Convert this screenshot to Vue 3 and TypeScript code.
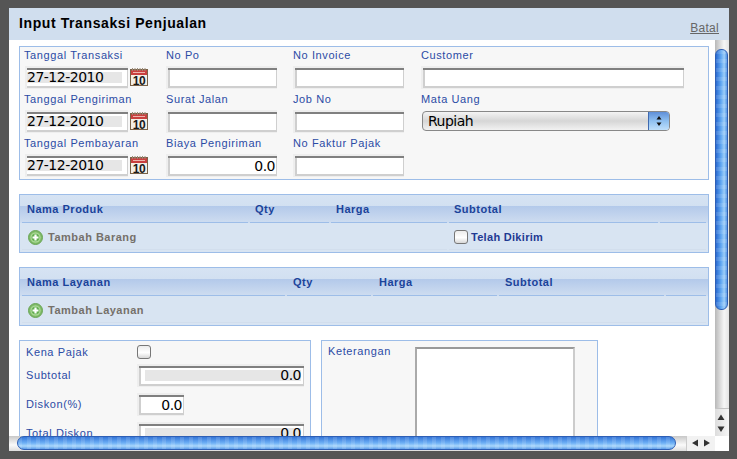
<script setup lang="ts">
interface Field {
  label: string;
  value?: string;
  kind: 'date' | 'text' | 'number' | 'wide' | 'select' | 'none';
}

const fields: Field[] = [
  { label: 'Tanggal Transaksi', value: '27-12-2010', kind: 'date' },
  { label: 'No Po', kind: 'text' },
  { label: 'No Invoice', kind: 'text' },
  { label: 'Customer', kind: 'wide' },
  { label: 'Tanggal Pengiriman', value: '27-12-2010', kind: 'date' },
  { label: 'Surat Jalan', kind: 'text' },
  { label: 'Job No', kind: 'text' },
  { label: 'Mata Uang', value: 'Rupiah', kind: 'select' },
  { label: 'Tanggal Pembayaran', value: '27-12-2010', kind: 'date' },
  { label: 'Biaya Pengiriman', value: '0.0', kind: 'number' },
  { label: 'No Faktur Pajak', kind: 'text' },
  { label: '', kind: 'none' },
];
</script>

<template>
  <div class="page">
    <div class="window">
      <header class="head">
        <h1>Input Transaksi Penjualan</h1>
        <a class="cancel">Batal</a>
      </header>
      <div class="main">
        <div class="content">
          <section class="box form-grid">
            <div v-for="f in fields" :key="f.label" class="field">
              <template v-if="f.kind !== 'none'">
                <label>{{ f.label }}</label>
                <div v-if="f.kind === 'date'" class="date-row">
                  <div class="inp date"><span>{{ f.value }}</span></div>
                  <svg class="cal" width="18" height="18" viewBox="0 0 18 18">
                    <rect x="0.500" y="1.500" width="17" height="16" fill="#f4efe6" stroke="#7a6248" />
                    <rect x="1" y="2" width="16" height="5" fill="#c9403f" />
                    <path d="M2.500 0v3M5 0v3M7.500 0v3M10 0v3M12.500 0v3M15 0v3" stroke="#9a8a78" />
                    <path d="M3 4.500h12" stroke="#eeb4ac" />
                    <text x="9" y="16.500" text-anchor="middle" class="cal-num">10</text>
                  </svg>
                </div>
                <div v-else-if="f.kind === 'select'" class="select">
                  <span>{{ f.value }}</span>
                  <i class="spin">
                    <svg width="8" height="12" viewBox="0 0 8 12">
                      <path d="M4 1l2.500 3.500h-5zM4 11L1.500 7.500h5z" fill="#111" />
                    </svg>
                  </i>
                </div>
                <div v-else :class="['inp', f.kind]"><span>{{ f.value }}</span></div>
              </template>
            </div>
          </section>

          <section class="box table">
            <div class="thead cols-a">
              <div>Nama Produk</div>
              <div>Qty</div>
              <div>Harga</div>
              <div>Subtotal</div>
              <div></div>
            </div>
            <div class="tbody split">
              <div class="tcell">
                <svg class="plus" width="15" height="15" viewBox="0 0 15 15">
                  <circle cx="7.500" cy="7.500" r="7" fill="#7db866" stroke="#6aa656" />
                  <circle cx="7.500" cy="7.500" r="5.200" fill="#a8d893" />
                  <circle cx="7.500" cy="7.500" r="3.800" fill="#62ad4f" />
                  <path d="M7.500 4.500v6M4.500 7.500h6" stroke="#fff" stroke-width="2.200" />
                </svg>
                <b class="add">Tambah Barang</b>
              </div>
              <div class="tcell sent">
                <i class="check"></i>
                <b>Telah Dikirim</b>
              </div>
            </div>
          </section>

          <section class="box table">
            <div class="thead cols-b">
              <div>Nama Layanan</div>
              <div>Qty</div>
              <div>Harga</div>
              <div>Subtotal</div>
              <div></div>
            </div>
            <div class="tbody">
              <div class="tcell">
                <svg class="plus" width="15" height="15" viewBox="0 0 15 15">
                  <circle cx="7.500" cy="7.500" r="7" fill="#7db866" stroke="#6aa656" />
                  <circle cx="7.500" cy="7.500" r="5.200" fill="#a8d893" />
                  <circle cx="7.500" cy="7.500" r="3.800" fill="#62ad4f" />
                  <path d="M7.500 4.500v6M4.500 7.500h6" stroke="#fff" stroke-width="2.200" />
                </svg>
                <b class="add">Tambah Layanan</b>
              </div>
            </div>
          </section>

          <div class="bottom">
            <section class="box totals">
              <div class="t-row">
                <label>Kena Pajak</label>
                <i class="check"></i>
              </div>
              <div class="t-row">
                <label>Subtotal</label>
                <div class="inp long"><span>0.0</span></div>
              </div>
              <div class="t-row">
                <label>Diskon(%)</label>
                <div class="inp short"><span>0.0</span></div>
              </div>
              <div class="t-row">
                <label>Total Diskon</label>
                <div class="inp long"><span>0.0</span></div>
              </div>
            </section>
            <section class="box notes">
              <label>Keterangan</label>
              <div class="area"></div>
            </section>
          </div>
        </div>

        <aside class="vbar">
          <div class="vthumb"></div>
          <div class="varrows">
            <svg width="13" height="28" viewBox="0 0 13 28">
              <path d="M6 5.500l3.500 5.500h-7zM6 23l-3.500-5.500h7z" fill="#333" />
            </svg>
          </div>
        </aside>
        <div class="hbar">
          <div class="hthumb"></div>
          <div class="harrows">
            <svg width="27" height="14" viewBox="0 0 27 14">
              <path d="M5 7l6-3.500v7zM23 7l-6-3.500v7z" fill="#333" />
            </svg>
          </div>
        </div>
        <div class="corner"></div>
      </div>
    </div>
  </div>
</template>

<style>
html, body {
  margin: 0;
  background: #555;
}
</style>

<style scoped>
.page {
  width: 737px;
  height: 459px;
  padding: 8px 8px 8px 9px;
  box-sizing: border-box;
  background: #555;
  overflow: hidden;
  font-family: "Liberation Sans", Arial, sans-serif;
}

.window {
  width: 720px;
  height: 443px;
  display: flex;
  flex-direction: column;
  background: #fff;
}

.head {
  height: 32px;
  flex: none;
  background: #d0deee;
  display: flex;
  justify-content: space-between;
  padding: 0 10px;
  box-sizing: border-box;
}

.head h1 {
  margin: 7px 0 0;
  font-size: 14px;
  line-height: 16px;
  letter-spacing: 0.6px;
  color: #000;
}

.cancel {
  margin-top: 13px;
  font-size: 12px;
  line-height: 14px;
  letter-spacing: 0.3px;
  color: #666;
  text-decoration: underline;
}

.main {
  flex: 1;
  min-height: 0;
  display: grid;
  grid-template-columns: 706px 14px;
  grid-template-rows: 396px 15px;
}

.content {
  overflow: hidden;
  padding: 6px 6px 0 10px;
}

.box {
  border: 1px solid #9dbde8;
  box-sizing: border-box;
}

label {
  font-size: 11px;
  line-height: 14px;
  letter-spacing: 0.6px;
  color: #2b4ba5;
  display: block;
}

.form-grid {
  height: 134px;
  background: #f7f7f7;
  display: grid;
  grid-template-columns: 142px 127px 128px 1fr;
  grid-auto-rows: 44px;
  padding: 1px 0 0 4px;
}

.inp {
  box-sizing: border-box;
  height: 23px;
  border: solid #eee;
  border-width: 2px 0 1px 2px;
  background: #fff;
  box-shadow: inset 0 2px 0 #808080, inset 2px 0 0 #cfcfcf, inset 0 -2px 0 #cfcfcf, inset -1px 0 0 #cfcfcf;
  font-family: "DejaVu Sans", sans-serif;
  font-size: 14px;
  letter-spacing: -0.5px;
  line-height: 20px;
  color: #000;
  padding: 0 2px;
  margin-top: 4px;
}

.text,
.number {
  width: 111px;
}

.wide {
  width: 263px;
}

.number {
  text-align: right;
}

.date-row {
  display: flex;
  align-items: flex-start;
  gap: 2px;
}

.date {
  width: 103px;
  margin-left: 1px;
  padding: 0 6px 0 0;
  box-shadow: inset 0 2px 0 #808080, inset 0 -2px 0 #cfcfcf, inset -1px 0 0 #cfcfcf;
}

.date span {
  display: block;
  margin-top: 4px;
  height: 11px;
  line-height: 11px;
  background: #e6e6e6;
}

.cal {
  margin-top: 6px;
}

.select {
  box-sizing: border-box;
  width: 248px;
  height: 20px;
  margin: 5px 0 0 1px;
  border: 1px solid #888;
  border-radius: 4px;
  background: linear-gradient(#f4f4f4, #d6d6d6 50%, #f2f2f2);
  display: flex;
  justify-content: space-between;
  font-family: "DejaVu Sans", sans-serif;
  font-size: 14px;
  letter-spacing: -0.5px;
  line-height: 18px;
  padding-left: 5px;
  overflow: hidden;
}

.spin {
  width: 20px;
  background: linear-gradient(#5f8fd8, #8fc0f0 50%, #bfe0fb);
  border-left: 1px solid #3f6ab0;
  display: flex;
  align-items: center;
  justify-content: center;
}

.table {
  margin-top: 14px;
  height: 59px;
  background: #d8e4f2;
  padding: 0 2px;
}

.thead {
  height: 28px;
  display: grid;
  column-gap: 2px;
  background: linear-gradient(#d6e3f3 0, #d2e0f1 11px, #b3c9ea 11px, #cddcf0 27px);
  margin: 0 -2px;
  padding: 0 2px;
}

.thead > div {
  border-bottom: 1px solid #9dbde8;
  font-size: 11px;
  font-weight: bold;
  letter-spacing: 0.5px;
  line-height: 14px;
  color: #1b439a;
  padding: 7px 0 0 5px;
}

.cols-a {
  grid-template-columns: 226px 79px 116px 209px 46px;
}

.cols-b {
  grid-template-columns: 263px 84px 124px 165px 40px;
}

.cols-b > div:nth-child(n + 2) {
  padding-left: 6px;
}

.tbody {
  height: 27px;
  display: flex;
  gap: 2px;
}

.tcell {
  flex: 1;
  display: flex;
  align-items: center;
  padding: 2px 0 0 6px;
  background: #d8e4f2;
  border-bottom: 1px solid #d2deed;
}

.split .tcell:first-child {
  flex: none;
  width: 425px;
  box-sizing: border-box;
}

.plus {
  margin-right: 5px;
}

.add {
  font-size: 11px;
  letter-spacing: 0.5px;
  color: #75706a;
}

.sent {
  padding-left: 5px;
}

.sent b {
  margin-left: 3px;
  font-size: 11px;
  letter-spacing: 0.3px;
  color: #1f3a93;
}

.check {
  display: block;
  box-sizing: border-box;
  width: 14px;
  height: 14px;
  border: 1px solid #777;
  border-radius: 3px;
  background: linear-gradient(#ececec, #fff 55%, #d8d8d8);
}

.bottom {
  margin-top: 14px;
  display: flex;
  gap: 10px;
}

.totals {
  width: 292px;
  height: 150px;
  background: #f7f7f7;
  padding: 0 6px;
  display: flex;
  flex-direction: column;
  row-gap: 6px;
}

.t-row {
  flex: none;
  height: 23px;
  display: flex;
  align-items: center;
}

.t-row:first-child {
  height: 21px;
  margin-bottom: -4px;
}

.t-row:not(:first-child) label {
  margin-bottom: 2px;
}

.t-row label {
  width: 111px;
}

.t-row .inp {
  margin-top: 0;
}

.long {
  width: 167px;
  text-align: right;
}

.long span {
  display: block;
  height: 11px;
  line-height: 11px;
  margin: 4px 1px 0 4px;
  background: #e6e6e6;
}

.short {
  width: 47px;
  text-align: right;
}

.notes {
  width: 277px;
  height: 150px;
  background: #f7f7f7;
  display: flex;
  align-items: flex-start;
  padding: 3px 0 0 6px;
}

.notes label {
  width: 87px;
}

.area {
  width: 160px;
  height: 120px;
  margin-top: 3px;
  background: #fff;
  border: 2px solid #ccc;
  border-top-color: #999;
  border-left-color: #aaa;
  box-sizing: border-box;
}

.cal-num {
  font: bold 12px "Liberation Sans", sans-serif;
  letter-spacing: -0.3px;
  fill: #1a1a1a;
}

.vbar {
  display: flex;
  flex-direction: column;
  background: linear-gradient(90deg, #b8b8b8, #f6f6f6 65%, #e4e4e4);
}

.vthumb {
  height: 261px;
  width: 13px;
  margin-top: 9px;
  box-sizing: border-box;
  border: 1px solid #2e5fb5;
  border-radius: 6px;
  background:
    repeating-linear-gradient(rgba(255, 255, 255, 0.12) 0 4px, rgba(255, 255, 255, 0) 4px 9px),
    linear-gradient(90deg, #2a6ad0, #5fa6f2 45%, #9ccdf8 75%, #4f92e4);
}

.varrows {
  margin-top: auto;
  height: 28px;
  background: linear-gradient(90deg, #ddd, #f6f6f6);
  border-top: 1px solid #c4c4c4;
  box-sizing: border-box;
  font-size: 0;
}

.hbar {
  display: flex;
  background: linear-gradient(#c8c8c8, #fafafa 60%, #ddd);
}

.hthumb {
  width: 659px;
  margin-left: 8px;
  height: 14px;
  border: 1px solid #2e5fb5;
  border-radius: 7px;
  box-sizing: border-box;
  background:
    repeating-linear-gradient(90deg, rgba(255, 255, 255, 0.12) 0 4px, rgba(255, 255, 255, 0) 4px 9px),
    linear-gradient(#3576d8, #6db0f5 50%, #a8d6fb 75%, #5b9ce8);
}

.harrows {
  margin-left: 10px;
  width: 29px;
  box-sizing: border-box;
  border-left: 1px solid #ccc;
  background: #f2f2f2;
  font-size: 0;
}

.corner {
  background: #fff;
}
</style>
